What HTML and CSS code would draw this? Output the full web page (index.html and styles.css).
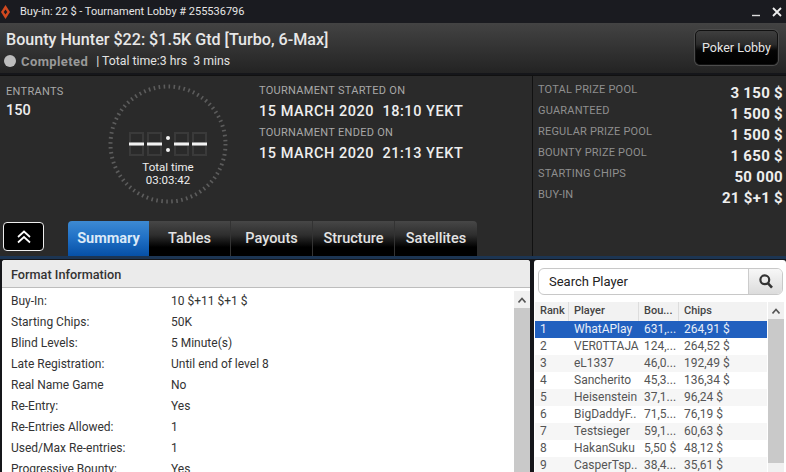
FILE: index.html
```html
<!DOCTYPE html>
<html lang="en">
<head>
<meta charset="utf-8">
<title>Tournament Lobby</title>
<link rel="stylesheet" href="styles.css">
</head>
<body>
<div class="app">
  <header class="titlebar">
    <svg class="logo" width="11" height="14" viewBox="0 0 11 14"><path d="M5.5 0 L10 7 L5.5 14 L1 7 Z" fill="#d2491f"/><path d="M5.5 4.5 L7.3 7 L5.5 9.5 L3.7 7 Z" fill="#1a1b20"/></svg>
    <span class="titlebar-text">Buy-in: 22 $ - Tournament Lobby # 255536796</span>
    <svg class="win-min" width="9" height="10" viewBox="0 0 9 10"><path d="M0 8.5H8" stroke="#ddd" stroke-width="1.4"/></svg>
    <svg class="win-close" width="10" height="10" viewBox="0 0 10 10"><path d="M1 1L9 9M9 1L1 9" stroke="#eee" stroke-width="1.8"/></svg>
  </header>
  <section class="head">
    <div class="head-left">
      <h1 class="head-title">Bounty Hunter $22: $1.5K Gtd [Turbo, 6-Max]</h1>
      <div class="head-status"><span class="dot"></span><b class="completed">Completed</b><span class="total">| Total time:3 hrs&nbsp; 3 mins</span></div>
    </div>
    <button class="lobby-btn">Poker Lobby</button>
  </section>
  <section class="info">
    <div class="info-main">
      <div class="info-top">
        <div class="entrants"><div class="lbl">ENTRANTS</div><div class="entrants-num">150</div></div>
        <div class="clock">
          <svg class="clock-svg" width="124" height="124" viewBox="0 0 124 124">
            <circle cx="62" cy="62" r="57.5" fill="none" stroke="#5c5c5c" stroke-width="4" stroke-dasharray="1.6 3.42"/>
            <g fill="#3a3a3a">
              <rect x="23" y="50" width="15" height="24"/><rect x="41" y="50" width="15" height="24"/><rect x="68" y="50" width="15" height="24"/><rect x="86" y="50" width="15" height="24"/>
            </g>
            <g fill="#2a2a2a">
              <rect x="25" y="52" width="11" height="8"/><rect x="25" y="64" width="11" height="8"/><rect x="43" y="52" width="11" height="8"/><rect x="43" y="64" width="11" height="8"/><rect x="70" y="52" width="11" height="8"/><rect x="70" y="64" width="11" height="8"/><rect x="88" y="52" width="11" height="8"/><rect x="88" y="64" width="11" height="8"/>
            </g>
            <g fill="#f2f2f2">
              <rect x="23" y="60.5" width="15" height="3"/><rect x="41" y="60.5" width="15" height="3"/><rect x="68" y="60.5" width="15" height="3"/><rect x="86" y="60.5" width="15" height="3"/>
              <circle cx="62" cy="56" r="2"/><circle cx="62" cy="68" r="2"/>
            </g>
          </svg>
          <div class="clock-text"><div>Total time</div><div>03:03:42</div></div>
        </div>
        <div class="dates">
          <div class="lbl">TOURNAMENT STARTED ON</div>
          <div class="date">15 MARCH 2020&nbsp; 18:10 YEKT</div>
          <div class="lbl lbl-gap">TOURNAMENT ENDED ON</div>
          <div class="date">15 MARCH 2020&nbsp; 21:13 YEKT</div>
        </div>
      </div>
      <nav class="tabs-row">
        <button class="collapse"><svg width="16" height="14" viewBox="0 0 16 14"><path d="M2 7L8 1.5L14 7M2 12.5L8 7L14 12.5" fill="none" stroke="#fff" stroke-width="1.7"/></svg></button>
        <div class="tabs">
          <span class="tab tab-active">Summary</span>
          <span class="tab">Tables</span>
          <span class="tab">Payouts</span>
          <span class="tab">Structure</span>
          <span class="tab">Satellites</span>
        </div>
      </nav>
    </div>
    <dl class="prizes">
      <div class="prize"><dt>TOTAL PRIZE POOL</dt><dd>3 150 $</dd></div>
      <div class="prize"><dt>GUARANTEED</dt><dd>1 500 $</dd></div>
      <div class="prize"><dt>REGULAR PRIZE POOL</dt><dd>1 500 $</dd></div>
      <div class="prize"><dt>BOUNTY PRIZE POOL</dt><dd>1 650 $</dd></div>
      <div class="prize"><dt>STARTING CHIPS</dt><dd>50 000</dd></div>
      <div class="prize"><dt>BUY-IN</dt><dd>21 $+1 $</dd></div>
    </dl>
  </section>
  <div class="rule"></div>
  <main class="bottom">
    <section class="format">
      <h2 class="format-head">Format Information</h2>
      <div class="format-body">
        <div class="format-list">
          <div class="frow"><span>Buy-In:</span><span>10 $+11 $+1 $</span></div>
          <div class="frow"><span>Starting Chips:</span><span>50K</span></div>
          <div class="frow"><span>Blind Levels:</span><span>5 Minute(s)</span></div>
          <div class="frow"><span>Late Registration:</span><span>Until end of level 8</span></div>
          <div class="frow"><span>Real Name Game</span><span>No</span></div>
          <div class="frow"><span>Re-Entry:</span><span>Yes</span></div>
          <div class="frow"><span>Re-Entries Allowed:</span><span>1</span></div>
          <div class="frow"><span>Used/Max Re-entries:</span><span>1</span></div>
          <div class="frow"><span>Progressive Bounty:</span><span>Yes</span></div>
        </div>
        <div class="scroll-left">
          <div class="scroll-cap-left"><svg width="8" height="6" viewBox="0 0 8 6"><path d="M0.5 5.5L4 1.5L7.5 5.5" fill="none" stroke="#555" stroke-width="1.6"/></svg></div>
          <div class="scroll-track-left"></div>
        </div>
      </div>
    </section>
    <aside class="players">
      <div class="search">
        <span class="search-text">Search Player</span>
        <span class="search-btn"><svg width="14" height="15" viewBox="0 0 14 15"><circle cx="5.8" cy="5.8" r="4.4" fill="none" stroke="#333" stroke-width="2.2"/><path d="M8.8 9.2L13 13.6" stroke="#333" stroke-width="2.6"/></svg></span>
      </div>
      <div class="grid-wrap">
        <div class="table">
          <div class="thead"><span>Rank</span><span>Player</span><span>Bou...</span><span>Chips</span></div>
          <div class="trow sel"><span>1</span><span>WhatAPlay</span><span>631,...</span><span>264,91 $</span></div>
          <div class="trow"><span>2</span><span>VER0TTAJA</span><span>124,...</span><span>264,52 $</span></div>
          <div class="trow alt"><span>3</span><span>eL1337</span><span>46,0...</span><span>192,49 $</span></div>
          <div class="trow"><span>4</span><span>Sancherito</span><span>45,3...</span><span>136,34 $</span></div>
          <div class="trow alt"><span>5</span><span>Heisenstein</span><span>37,1...</span><span>96,24 $</span></div>
          <div class="trow"><span>6</span><span>BigDaddyF..</span><span>71,5...</span><span>76,19 $</span></div>
          <div class="trow alt"><span>7</span><span>Testsieger</span><span>59,1...</span><span>60,63 $</span></div>
          <div class="trow"><span>8</span><span>HakanSuku</span><span>5,50 $</span><span>48,12 $</span></div>
          <div class="trow alt"><span>9</span><span>CasperTsp..</span><span>38,4...</span><span>35,61 $</span></div>
        </div>
        <div class="scroll-right">
          <div class="scroll-cap"><svg width="8" height="6" viewBox="0 0 8 6"><path d="M0.5 5.5L4 1.5L7.5 5.5" fill="none" stroke="#555" stroke-width="1.6"/></svg></div>
          <div class="scroll-thumb"></div>
        </div>
      </div>
    </aside>
  </main>
</div>
</body>
</html>
```
FILE: styles.css
```css
* { box-sizing: border-box; margin: 0; padding: 0; }
html, body { width: 786px; height: 472px; overflow: hidden; background: #15161a; }
body { font-family: Roboto, "Liberation Sans", sans-serif; color: #222; }
.app { width: 786px; height: 472px; display: flex; flex-direction: column; overflow: hidden; }

.titlebar { height: 23px; flex: none; background: #1a1b20; display: flex; align-items: center; padding-right: 4px; color: #e6e6e6; font-size: 11px; }
.logo { flex: none; }
.titlebar-text { margin-left: 9px; flex: 1; }
.win-min { margin-right: 11px; }

.head { height: 50px; flex: none; background: linear-gradient(#434343, #232323); display: flex; justify-content: space-between; padding: 7px 8px 0 6px; }
.head-title { font-size: 16.1px; line-height: 20px; font-weight: 500; color: #e8e8e8; white-space: nowrap; }
.head-status { display: flex; align-items: center; margin-top: 2px; height: 18px; font-size: 12.3px; }
.dot { width: 12px; height: 12px; border-radius: 50%; background: #bdbdbd; margin-left: -2px; margin-right: 5px; }
.completed { color: #999; font-weight: 700; font-size: 13px; letter-spacing: 0.4px; margin-right: 8px; }
.total { color: #e2e2e2; }
.lobby-btn { width: 83px; height: 35px; border-radius: 5px; border: 1px solid #111; box-shadow: 0 0 0 1px #4c4c4c; background: linear-gradient(#3f3f3f, #2c2c2c 40%, #050505 60%, #000); color: #e6e6e6; font: 400 12.5px Roboto, sans-serif; }

.info { height: 181px; flex: none; margin-top: 2px; display: flex; background: #2a2a2a; border-top: 1px solid #111; }
.info-main { width: 533px; flex: none; display: flex; flex-direction: column; border-right: 1px solid #111; }
.info-top { height: 145px; display: flex; flex: none; padding-left: 6px; }
.lbl { font-size: 11px; color: #a8a8a8; letter-spacing: 0.3px; line-height: 14px; }
.entrants { width: 100px; padding-top: 9px; flex: none; }
.entrants-num { font-size: 14.5px; line-height: 20px; font-weight: 500; color: #eee; margin-top: 2px; }
.clock { width: 124px; height: 124px; flex: none; margin-top: 6px; display: grid; justify-items: center; }
.clock-svg, .clock-text { grid-area: 1 / 1; }
.clock-text { margin-top: 79px; text-align: center; color: #eee; font-size: 11.5px; line-height: 13px; }
.dates { margin-left: 29px; padding-top: 8px; }
.date { font-size: 14.5px; font-weight: 500; color: #eee; line-height: 20px; margin-top: 4px; letter-spacing: 0.55px; white-space: nowrap; }
.lbl-gap { margin-top: 4px; }

.tabs-row { height: 35px; flex: none; display: flex; align-items: flex-start; padding-left: 3px; }
.collapse { width: 41px; height: 29px; margin-top: 1px; border: 1px solid #eee; border-radius: 4px; background: #000; display: flex; align-items: center; justify-content: center; flex: none; }
.tabs { display: flex; margin-left: 24px; }
.tab { height: 35px; width: 82px; display: flex; align-items: center; justify-content: center; padding-bottom: 1px; border-right: 1px solid #333; background: linear-gradient(#474747, #2e2e2e 40%, #000 75%, #000); color: #e3e3e3; font-size: 14.5px; font-weight: 500; }
.tab-active { width: 81px; border-radius: 4px 0 0 0; background: linear-gradient(#3d8ad2, #2272c7 45%, #0650a6); color: #dbe9f7; border-right: 0; font-weight: 700; }
.tab:last-child { border-right: 0; border-radius: 0 4px 0 0; }

.prizes { flex: 1; padding: 6px 3px 0 5px; min-width: 0; }
.prize { height: 21px; display: flex; justify-content: space-between; align-items: center; }
.prize dt { font-size: 11px; letter-spacing: 0.2px; color: #8f8f8f; padding-bottom: 6px; }
.prize dd { font-size: 15px; font-weight: 700; letter-spacing: 0.3px; color: #eee; }

.rule { height: 3px; flex: none; background: #1c3553; }

.bottom { flex: 1; display: flex; min-height: 0; background: #15161a; }
.format { width: 528px; flex: none; background: #fff; margin-left: 2px; margin-top: 1px; border-radius: 3px 3px 0 0; overflow: hidden; display: flex; flex-direction: column; }
.format-head { height: 28px; flex: none; background: #ebebeb; border-bottom: 1px solid #bdbdbd; font-size: 12.7px; font-weight: 500; color: #333; line-height: 29px; padding-left: 9px; }
.format-body { flex: 1; display: flex; min-height: 0; }
.format-list { flex: 1; padding-left: 9px; padding-top: 3px; }
.frow { display: grid; grid-template-columns: 160px 1fr; height: 21px; line-height: 21px; font-size: 12px; color: #333; }
.scroll-left { width: 16px; flex: none; margin-top: 3px; display: flex; flex-direction: column; }
.scroll-cap-left { height: 17px; flex: none; background: #f0f0f0; display: flex; align-items: center; justify-content: center; }
.scroll-track-left { flex: 1; background: #c9c9c9; }

.players { flex: 1; background: #fff; margin-top: 1px; margin-left: 4px; border-radius: 3px 3px 0 0; min-width: 0; display: flex; flex-direction: column; padding-top: 8px; }
.search { height: 27px; flex: none; margin: 0 3px 0 4px; border: 1px solid #c8c8c8; border-radius: 6px; display: flex; overflow: hidden; }
.search-text { flex: 1; padding-left: 10px; line-height: 25px; font-size: 13px; color: #222; }
.search-btn { width: 34px; flex: none; border-left: 1px solid #ccc; background: linear-gradient(#f7f7f7, #dcdcdc); display: flex; align-items: center; justify-content: center; }
.grid-wrap { flex: 1; display: flex; margin-top: 7px; min-height: 0; padding-left: 1px; }
.table { width: 232px; flex: none; }
.thead, .trow { display: grid; grid-template-columns: 34px 70px 40px 1fr; }
.thead { height: 19px; line-height: 17px; font-size: 11px; font-weight: 500; color: #444; background: #f2f2f2; }
.thead span { padding-left: 5px; border-right: 1px solid #ddd; }
.thead span:last-child { border-right: 0; }
.trow { height: 17px; line-height: 17px; font-size: 12px; color: #555; white-space: nowrap; background: #fff; }
.trow span { padding-left: 5px; overflow: hidden; }
.alt { background: #f6f6f6; }
.sel { background: #2160bf; color: #e8eef8; }
.scroll-right { width: 16px; margin-left: 1px; flex: none; display: flex; flex-direction: column; background: #f0f0f0; }
.scroll-cap { height: 17px; flex: none; display: flex; align-items: center; justify-content: center; }
.scroll-thumb { height: 144px; flex: none; background: #c9c9c9; }
```
